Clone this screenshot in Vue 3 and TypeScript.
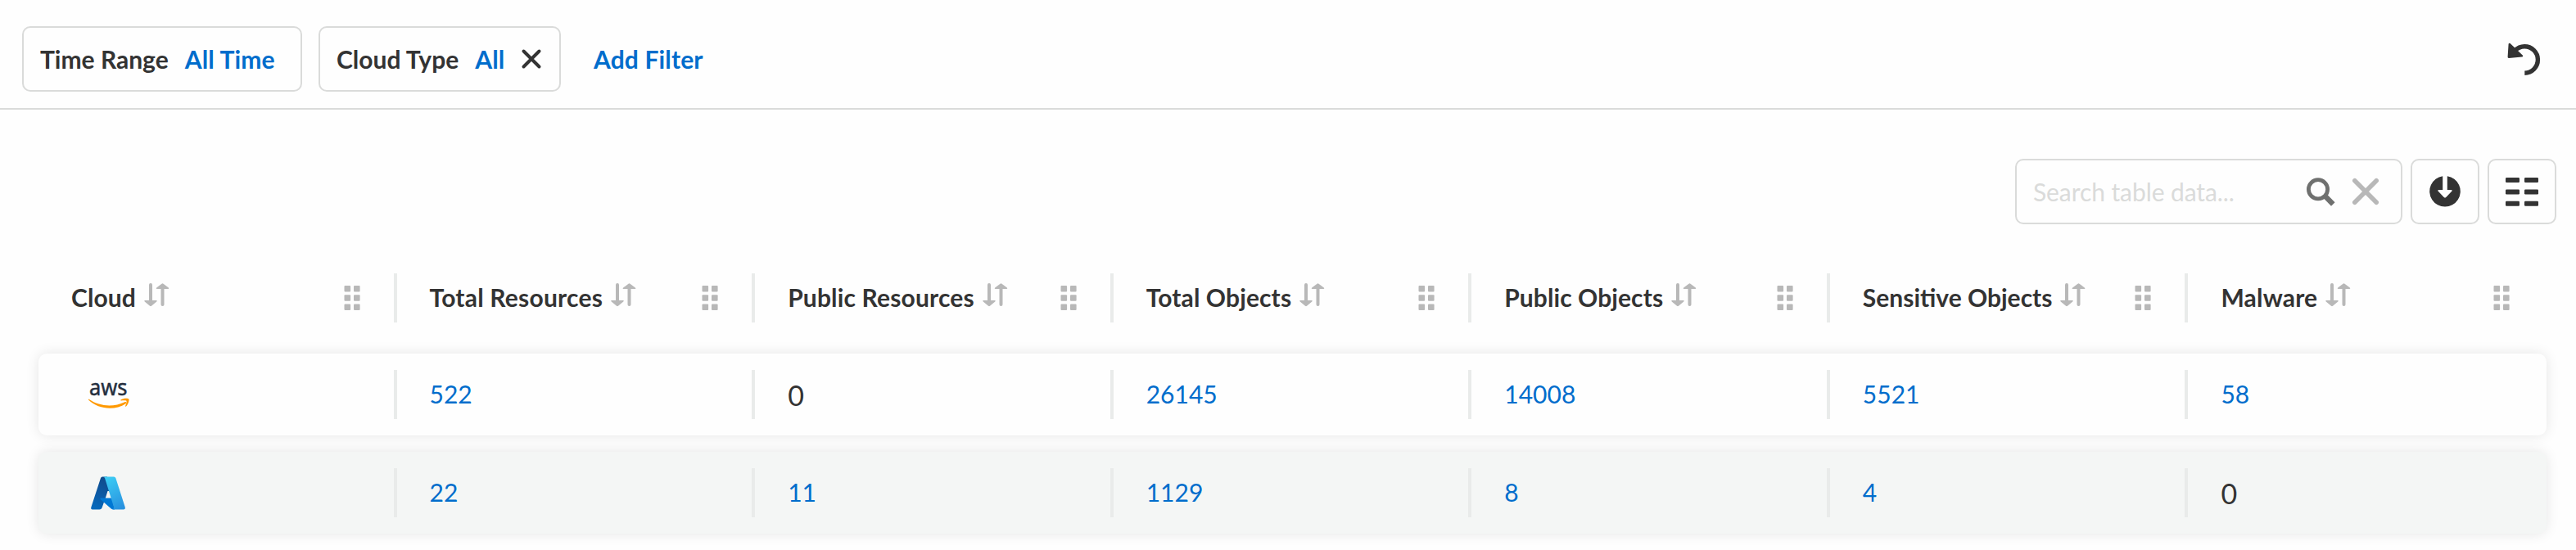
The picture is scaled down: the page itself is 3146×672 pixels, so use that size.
<script setup lang="ts">
interface Row {
  cloud: 'aws' | 'azure'
  values: number[]
}

interface Column {
  title: string
  tracking: number
}

const columns: Column[] = [
  { title: 'Cloud', tracking: 0.1 },
  { title: 'Total Resources', tracking: 0.22 },
  { title: 'Public Resources', tracking: 0.16 },
  { title: 'Total Objects', tracking: 0.12 },
  { title: 'Public Objects', tracking: 0.08 },
  { title: 'Sensitive Objects', tracking: 0 },
  { title: 'Malware', tracking: 0.2 },
]

const rows: Row[] = [
  { cloud: 'aws', values: [522, 0, 26145, 14008, 5521, 58] },
  { cloud: 'azure', values: [22, 11, 1129, 8, 4, 0] },
]
</script>

<template>
  <div class="page">
    <header class="filters">
      <button class="chip range">
        <span>Time Range</span><span class="accent">All Time</span>
      </button>
      <button class="chip cloud-type">
        <span>Cloud Type</span><span class="accent">All</span>
        <svg class="close" viewBox="0 0 24 24"><path d="M2.5 2.5 21.5 21.5M21.5 2.5 2.5 21.5" /></svg>
      </button>
      <a class="add accent">Add Filter</a>
      <svg class="undo" viewBox="0 0 40 40">
        <path class="arc" d="M9 10C12.500 6.500 16.500 4.700 21 4.700A16.200 16.200 0 0 1 21.300 37.200" />
        <path class="head" d="M3.600 1 18.800 15.500Q20 17.300 18 17.400L2 18.900Q.4 19 .6 17.300L1.600 1.700Q2.100 0 3.600 1Z" />
      </svg>
    </header>

    <section class="toolbar">
      <div class="search">
        <span class="placeholder">Search table data...</span>
        <svg class="magnifier" viewBox="0 0 35 35">
          <circle cx="14" cy="14.300" r="11.600" />
          <path d="M22.500 22.500 32.300 32.500" />
        </svg>
        <svg class="clear" viewBox="0 0 32 32"><path d="M2.800 2.800 29.200 29.200M29.200 2.800 2.800 29.200" /></svg>
      </div>
      <button class="tool">
        <svg class="download" viewBox="0 0 38 38">
          <path class="disc" d="M16.200 .2A18.800 18.800 0 1 0 21.800 .2V17H26.500Q28.500 17 27.200 18.800L20.300 26Q19 27.200 17.700 26L10.800 18.800Q9.500 17 11.500 17H16.200Z" />
        </svg>
      </button>
      <button class="tool">
        <svg class="list" viewBox="0 0 40 35">
          <g v-for="y in [0, 14.400, 28.800]" :key="y">
            <rect x="0" :y="y" width="17" height="6" rx="1.200" />
            <rect x="23" :y="y" width="17" height="6" rx="1.200" />
          </g>
        </svg>
      </button>
    </section>

    <main class="table">
      <div class="line head-line">
        <div v-for="column in columns" :key="column.title" class="cell">
          <span class="title" :style="{ letterSpacing: column.tracking + 'px' }">{{ column.title }}</span>
          <svg class="sort" viewBox="0 0 30 29">
            <path d="M8 2V22M22.500 7V26" />
            <path class="tip" d="M1 21H15Q16.500 21.300 15.300 22.500L9 27.800Q8 28.500 7 27.800L.7 22.500Q-.5 21.300 1 21ZM15.500 7H29.500Q31 6.700 29.800 5.500L23.500 .7Q22.500 0 21.500 .7L15.200 5.500Q14 6.700 15.500 7Z" />
          </svg>
          <svg class="grip" viewBox="0 0 20 30">
            <g v-for="y in [0, 11.200, 22.400]" :key="y">
              <rect x=".5" :y="y" width="7.600" height="7.600" rx="1" />
              <rect x="12" :y="y" width="7.600" height="7.600" rx="1" />
            </g>
          </svg>
        </div>
      </div>

      <div v-for="row in rows" :key="row.cloud" class="line row" :class="row.cloud">
        <div class="cell">
          <svg v-if="row.cloud === 'aws'" class="logo-aws" viewBox="0 0 50 34">
            <text x="1" y="18" textLength="46.500" lengthAdjust="spacingAndGlyphs">aws</text>
            <path d="M.6 22.800C14 32 31 32.500 44.300 26.200C46 25.500 47 27 45.500 28.200C32 37 12 35 .2 23.700C-.4 23 .1 22.500 .6 22.800Z" />
            <path d="M39.500 23.600C42.500 21.200 48.500 21.400 49.300 22.400C50 23.500 49 28.500 46 31.500C45.400 32 44.900 31.800 45.100 31.100C46 28.800 47 25.500 46.400 24.700C45.700 23.900 42.500 24.100 40 24.400C39.200 24.500 39 24 39.500 23.600Z" />
          </svg>
          <svg v-else class="logo-azure" viewBox="0 0 42 41">
            <defs>
              <linearGradient id="azure-left" x1=".6" y1="0" x2=".3" y2="1">
                <stop offset="0" stop-color="#114a8b" />
                <stop offset="1" stop-color="#0669bc" />
              </linearGradient>
              <linearGradient id="azure-right" x1=".3" y1="0" x2=".7" y2="1">
                <stop offset="0" stop-color="#3ccbf4" />
                <stop offset="1" stop-color="#2892df" />
              </linearGradient>
            </defs>
            <path fill="url(#azure-left)" d="M14 .5H20L24 18H20.500L17.800 26.500 13.500 38.500Q12.800 40.500 10.500 40.500H2Q-.5 40.500 .4 37.500L12 2Q12.500 .5 14 .5Z" />
            <path fill="#0078d4" d="M12 26.500H26L29 40.500H27.500Q26 40.500 25 39.700L11.500 28Q11 26.500 12 26.500Z" />
            <path fill="url(#azure-right)" d="M14.500 .5H28Q29.700 .5 30.300 2L41.700 37.500Q42.500 40.500 39.800 40.500H26Q28.200 40 28 37.500L17 2Q16.400 .5 14.500 .5Z" />
          </svg>
        </div>
        <div v-for="(value, i) in row.values" :key="i" class="cell">
          <a v-if="value > 0" class="link">{{ value }}</a>
          <span v-else class="zero">{{ value }}</span>
        </div>
      </div>
    </main>
  </div>
</template>

<style>
body {
  margin: 0;
  background: #fefefe;
}
</style>

<style scoped>
.page {
  box-sizing: border-box;
  height: 672px;
  overflow: hidden;
  background: #fefefe;
  color: #333;
  font-family: Lato, "Liberation Sans", sans-serif;
  font-size: 30px;
  line-height: 36px;
}
svg {
  display: block;
  flex: none;
  overflow: visible;
}
button {
  font: inherit;
  color: inherit;
  margin: 0;
}
.accent,
.link {
  color: #006dcc;
}
.filters {
  box-sizing: border-box;
  height: 134px;
  padding: 32px 44px 20px 27px;
  display: flex;
  align-items: center;
  border-bottom: 2px solid #dadbda;
  font-weight: 700;
}
.filters .accent {
  letter-spacing: 0.15px;
}
.chip {
  box-sizing: border-box;
  height: 80px;
  padding: 0 20px;
  display: flex;
  align-items: center;
  gap: 20px;
  border: 2px solid #dadbda;
  border-radius: 10px;
  background: #fefefe;
  white-space: nowrap;
}
.range {
  width: 342px;
}
.cloud-type {
  width: 296px;
  margin-left: 20px;
}
.add {
  margin-left: 40px;
}
.close {
  width: 24px;
  height: 24px;
  margin-left: 1px;
}
.close path {
  fill: none;
  stroke: #333;
  stroke-width: 4;
  stroke-linecap: round;
}
.undo {
  width: 40px;
  height: 40px;
  margin-left: auto;
}
.undo .arc {
  fill: none;
  stroke: #333;
  stroke-width: 5.4;
}
.undo .head {
  fill: #333;
}
.toolbar {
  height: 80px;
  margin: 60px 24px 0 0;
  display: flex;
  justify-content: flex-end;
  gap: 10px;
}
.search,
.tool {
  box-sizing: border-box;
  height: 80px;
  display: flex;
  align-items: center;
  border: 2px solid #dadbda;
  border-radius: 10px;
  background: #fefefe;
}
.search {
  width: 473px;
  padding: 0 27px 0 20px;
}
.tool {
  width: 84px;
  padding: 0;
  justify-content: center;
}
.placeholder {
  flex: 1;
  color: #dadbda;
  letter-spacing: -0.08px;
}
.magnifier {
  width: 35px;
  height: 35px;
}
.magnifier circle,
.magnifier path {
  fill: none;
  stroke: #6f706f;
  stroke-width: 4.8;
}
.magnifier path {
  stroke-width: 6.4;
}
.clear {
  width: 32px;
  height: 32px;
  margin-left: 21px;
}
.clear path {
  fill: none;
  stroke: #b8b8b8;
  stroke-width: 5.6;
  stroke-linecap: round;
}
.download {
  width: 38px;
  height: 38px;
}
.disc,
.list {
  fill: #333;
}
.list {
  width: 40px;
  height: 35px;
}
.table {
  margin: 60px 36px 0 47px;
}
.line {
  display: grid;
  grid-template-columns: repeat(7, 1fr);
}
.cell {
  box-sizing: border-box;
  height: 60px;
  padding: 0 41px 0 40px;
  display: flex;
  align-items: center;
  border-right: 4px solid #e9ebea;
}
.cell:last-child {
  border-right-color: transparent;
}
.head-line {
  margin-bottom: 38px;
  font-weight: 700;
}
.title,
.link {
  margin-bottom: 2px;
}
.sort {
  width: 30px;
  height: 29px;
  margin: 0 0 8px 10px;
}
.sort path {
  fill: none;
  stroke: #b8b8b8;
  stroke-width: 4;
  stroke-linecap: round;
}
.sort .tip {
  fill: #b8b8b8;
  stroke: none;
}
.grip {
  width: 20px;
  height: 30px;
  margin-left: auto;
  fill: #b8b8b8;
}
.row {
  padding: 20px 0;
  margin-bottom: 20px;
  border-radius: 10px;
  background: #fefefe;
  box-shadow: 0 0 16px rgba(0, 0, 0, 0.1);
}
.azure {
  background: #f4f6f5;
}
.zero {
  font-size: 34px;
  padding-top: 2px;
}
.logo-aws {
  width: 50px;
  height: 34px;
  margin-left: 21px;
}
.logo-aws text {
  fill: #252f3e;
  stroke: #252f3e;
  stroke-width: 0.5;
  font: 400 28px "Noto Sans", "Open Sans", sans-serif;
}
.logo-aws path {
  fill: #f90;
}
.logo-azure {
  width: 42px;
  height: 41px;
  margin-left: 24px;
}
</style>
